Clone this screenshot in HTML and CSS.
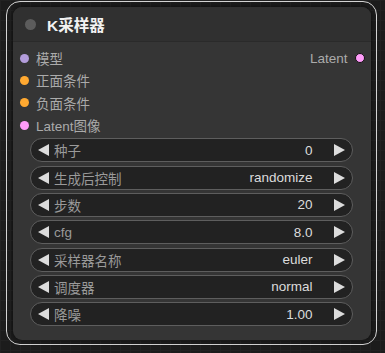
FILE: index.html
```html
<!DOCTYPE html>
<html lang="zh">
<head>
  <meta charset="UTF-8" />
  <title>K采样器</title>
  <link rel="stylesheet" href="styles.css">
</head>
<body>
  <!-- Selected node -->
  <div class="selection">
    <div class="node">
      <div class="node-title">
        <span class="title-dot"></span>
        <span class="title-text">K采样器</span>
      </div>

      <!-- Inputs / outputs -->
      <div class="slots">
        <div class="slot-row">
          <div class="slot"><span class="dot dot-model"></span>模型</div>
          <div class="slot slot-out">Latent<span class="dot dot-latent dot-out"></span></div>
        </div>
        <div class="slot-row">
          <div class="slot"><span class="dot dot-cond"></span>正面条件</div>
        </div>
        <div class="slot-row">
          <div class="slot"><span class="dot dot-cond"></span>负面条件</div>
        </div>
        <div class="slot-row">
          <div class="slot"><span class="dot dot-latent"></span>Latent图像</div>
        </div>
      </div>

      <!-- Widgets -->
      <div class="widgets">
        <div class="widget">
          <svg class="arrow" width="11" height="12" viewBox="0 0 11 12"><polygon points="11,0 11,12 0,6" /></svg>
          <span class="w-label">种子</span>
          <span class="w-value">0</span>
          <svg class="arrow arrow-r" width="11" height="12" viewBox="0 0 11 12"><polygon points="0,0 0,12 11,6" /></svg>
        </div>
        <div class="widget">
          <svg class="arrow" width="11" height="12" viewBox="0 0 11 12"><polygon points="11,0 11,12 0,6" /></svg>
          <span class="w-label">生成后控制</span>
          <span class="w-value">randomize</span>
          <svg class="arrow arrow-r" width="11" height="12" viewBox="0 0 11 12"><polygon points="0,0 0,12 11,6" /></svg>
        </div>
        <div class="widget">
          <svg class="arrow" width="11" height="12" viewBox="0 0 11 12"><polygon points="11,0 11,12 0,6" /></svg>
          <span class="w-label">步数</span>
          <span class="w-value">20</span>
          <svg class="arrow arrow-r" width="11" height="12" viewBox="0 0 11 12"><polygon points="0,0 0,12 11,6" /></svg>
        </div>
        <div class="widget">
          <svg class="arrow" width="11" height="12" viewBox="0 0 11 12"><polygon points="11,0 11,12 0,6" /></svg>
          <span class="w-label">cfg</span>
          <span class="w-value">8.0</span>
          <svg class="arrow arrow-r" width="11" height="12" viewBox="0 0 11 12"><polygon points="0,0 0,12 11,6" /></svg>
        </div>
        <div class="widget">
          <svg class="arrow" width="11" height="12" viewBox="0 0 11 12"><polygon points="11,0 11,12 0,6" /></svg>
          <span class="w-label">采样器名称</span>
          <span class="w-value">euler</span>
          <svg class="arrow arrow-r" width="11" height="12" viewBox="0 0 11 12"><polygon points="0,0 0,12 11,6" /></svg>
        </div>
        <div class="widget">
          <svg class="arrow" width="11" height="12" viewBox="0 0 11 12"><polygon points="11,0 11,12 0,6" /></svg>
          <span class="w-label">调度器</span>
          <span class="w-value">normal</span>
          <svg class="arrow arrow-r" width="11" height="12" viewBox="0 0 11 12"><polygon points="0,0 0,12 11,6" /></svg>
        </div>
        <div class="widget">
          <svg class="arrow" width="11" height="12" viewBox="0 0 11 12"><polygon points="11,0 11,12 0,6" /></svg>
          <span class="w-label">降噪</span>
          <span class="w-value">1.00</span>
          <svg class="arrow arrow-r" width="11" height="12" viewBox="0 0 11 12"><polygon points="0,0 0,12 11,6" /></svg>
        </div>
      </div>
    </div>
  </div>
</body>
</html>
```

FILE: styles.css
```css
/* Global reset */
* {
  margin: 0;
  padding: 0;
  box-sizing: border-box;
}

body {
  font-family: 'Liberation Sans', 'Noto Sans CJK SC', sans-serif;
  font-size: 13.5px;
  background-color: #1c1c1c;
  /* faint canvas grid */
  background-image:
    linear-gradient(#222 1px, transparent 1px),
    linear-gradient(90deg, #222 1px, transparent 1px);
  background-size: 10px 10px;
  width: 385px;
  height: 353px;
  overflow: hidden;
}

/* Selection outline round the node */
.selection {
  margin: 1px 0 0 6px;
  width: 371px;
  border: 1px solid #d4d4d4;
  border-radius: 14px;
  padding: 5px 5px 4px 5.5px;
}

.node {
  height: 333px;
  background: #353535;
  border-radius: 9px;
  box-shadow: 0 0 5px rgba(0, 0, 0, 0.6);
  overflow: hidden;
}

/* Title bar */
.node-title {
  height: 35px;
  display: flex;
  align-items: center;
  background: #303030;
  border-bottom: 1px solid #2a2a2a;
}
.title-dot {
  width: 11px;
  height: 11px;
  border-radius: 50%;
  background: #5c5c5c;
  margin-left: 12px;
}
.title-text {
  margin-left: 11.5px;
  color: #f2f2f2;
  font-weight: bold;
  font-size: 15.5px;
}

/* Slots */
.slots {
  padding-top: 5px;
}
.slot-row {
  height: 22.3px;
  display: flex;
  align-items: center;
  justify-content: space-between;
}
.slot {
  display: flex;
  align-items: center;
  color: #ababab;
}
.dot {
  width: 9px;
  height: 9px;
  border-radius: 50%;
  margin-left: 7px;
  margin-right: 7.5px;
}
.dot-model  { background: #b39ddb; }
.dot-cond   { background: #ffa931; }
.dot-latent { background: #ff9cf9; }
.dot-out {
  width: 10px;
  height: 10px;
  border: 1px solid #111;
  margin-left: 7.5px;
  margin-right: 6px;
}

/* Widgets */
.widgets {
  margin-top: 2px;
  padding: 0 18.5px 0 17.5px;
  display: flex;
  flex-direction: column;
  gap: 3.33px;
}
.widget {
  height: 24px;
  display: flex;
  align-items: center;
  background: #222;
  border: 1px solid #5e5e5e;
  border-radius: 12px;
  padding: 0 7px;
}
.arrow {
  fill: #dcdcdc;
  flex-shrink: 0;
}
.w-label {
  margin-left: 5px;
  color: #9a9a9a;
  flex: 1;
}
.w-value {
  color: #dcdcdc;
  margin-right: 21px;
}
```
